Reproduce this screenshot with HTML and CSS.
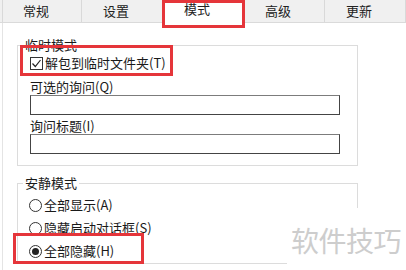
FILE: index.html
```html
<!DOCTYPE html>
<html lang="zh">
<head>
<meta charset="utf-8">
<link rel="stylesheet" href="styles.css">
</head>
<body>
<div class="tabs">
  <div class="tab">常规</div>
  <div class="tab">设置</div>
  <div class="tab active">模式<span class="mark mark-tab"></span></div>
  <div class="tab">高级</div>
  <div class="tab">更新</div>
</div>
<div class="page">
  <fieldset class="group g1">
    <legend>临时模式</legend>
    <div class="row check-row">
      <span class="checkbox"><svg width="11" height="11" viewBox="0 0 11 11"><path d="M1.5 5.5 L4.3 8.5 L9.5 2" fill="none" stroke="#222" stroke-width="1.2"/></svg></span>
      <span>解包到临时文件夹(T)</span>
    </div>
    <div class="label l1">可选的询问(Q)</div>
    <div class="input"></div>
    <div class="label l2">询问标题(I)</div>
    <div class="input"></div>
  </fieldset>
  <fieldset class="group g2">
    <legend>安静模式</legend>
    <div class="row radio-row"><span class="radio"></span><span>全部显示(A)</span></div>
    <div class="row radio-row"><span class="radio"></span><span>隐藏启动对话框(S)</span></div>
    <div class="row radio-row"><span class="radio on"></span><span>全部隐藏(H)</span></div>
  </fieldset>
  <span class="mark mark-check"></span>
  <span class="mark mark-radio"></span>
  <div class="watermark">软件技巧</div>
</div>
</body>
</html>
```
FILE: styles.css
```css
html, body {
  margin: 0;
  padding: 0;
  background: #ffffff;
  width: 406px;
  height: 270px;
  overflow: hidden;
  font-family: "Noto Sans CJK SC", "Noto Sans", sans-serif;
  font-size: 13px;
  color: #1a1a1a;
}
.tabs {
  display: flex;
  height: 22px;
  background: #f0f0f0;
  border-bottom: 1px solid #dadada;
  padding-left: 2px;
}
.tab {
  padding-right: 12px;
  box-sizing: border-box;
  width: 81px;
  flex: none;
  text-align: center;
  line-height: 22px;
  border-right: 1px solid #d9d9d9;
  color: #222;
}
.tab:first-child {
  border-left: 1px solid #d9d9d9;
  width: 80px;
}
.tab.active {
  position: relative;
  background: #ffffff;
  line-height: 17px;
  height: 23px;
}
.mark {
  position: absolute;
  border: 3px solid #e5353a;
  box-sizing: border-box;
  pointer-events: none;
}
.mark-tab {
  left: -1px;
  top: 0;
  width: 83px;
  height: 28px;
}
.page {
  position: relative;
  margin-left: 2px;
  padding-top: 14px;
  height: 233px;
  border-left: 1px solid #e4e4e4;
}
.group {
  margin: 0 0 0 14px;
  width: 341px;
  box-sizing: border-box;
  border: 1px solid #dcdcdc;
  padding: 0 12px;
  min-width: 0;
}
.group legend {
  padding: 0 2px;
  margin-left: -7px;
  line-height: 16px;
  height: 16px;
}
.g1 {
  padding-top: 2px;
  padding-bottom: 11px;
}
.g2 {
  margin-top: 9px;
  padding-top: 6px;
  padding-bottom: 4px;
}
.row {
  display: flex;
  align-items: center;
  height: 16px;
  line-height: 16px;
}
.checkbox {
  width: 13px;
  height: 13px;
  box-sizing: border-box;
  border: 1px solid #333;
  margin-right: 2px;
  display: flex;
  align-items: center;
  justify-content: center;
  background: #fff;
}
.checkbox svg { display: block; }
.label {
  line-height: 16px;
  height: 16px;
}
.l1 { margin-top: 8px; }
.l2 { margin-top: 3px; }
.input {
  height: 20px;
  width: 310px;
  box-sizing: border-box;
  border: 1px solid #444;
  border-top-color: #7c7c7c;
  background: #fff;
}
.radio-row + .radio-row { margin-top: 7px; }
.radio {
  width: 13px;
  height: 13px;
  box-sizing: border-box;
  border: 1px solid #333;
  border-radius: 50%;
  margin-right: 2px;
  margin-left: -1px;
  display: flex;
  align-items: center;
  justify-content: center;
  background: #fff;
}
.radio.on::after {
  content: "";
  width: 7px;
  height: 7px;
  border-radius: 50%;
  background: #222;
}
.mark-check {
  left: 17px;
  top: 22px;
  width: 153px;
  height: 31px;
}
.mark-radio {
  left: 10px;
  top: 210px;
  width: 131px;
  height: 31px;
}
.watermark {
  position: absolute;
  right: 0;
  top: 185px;
  width: 119px;
  height: 62px;
  background: #ffffff;
  color: #cdcdcd;
  font-size: 28px;
  line-height: 34px;
  padding-top: 15px;
  box-sizing: border-box;
  padding-left: 4px;
  letter-spacing: -0.5px;
}
```
